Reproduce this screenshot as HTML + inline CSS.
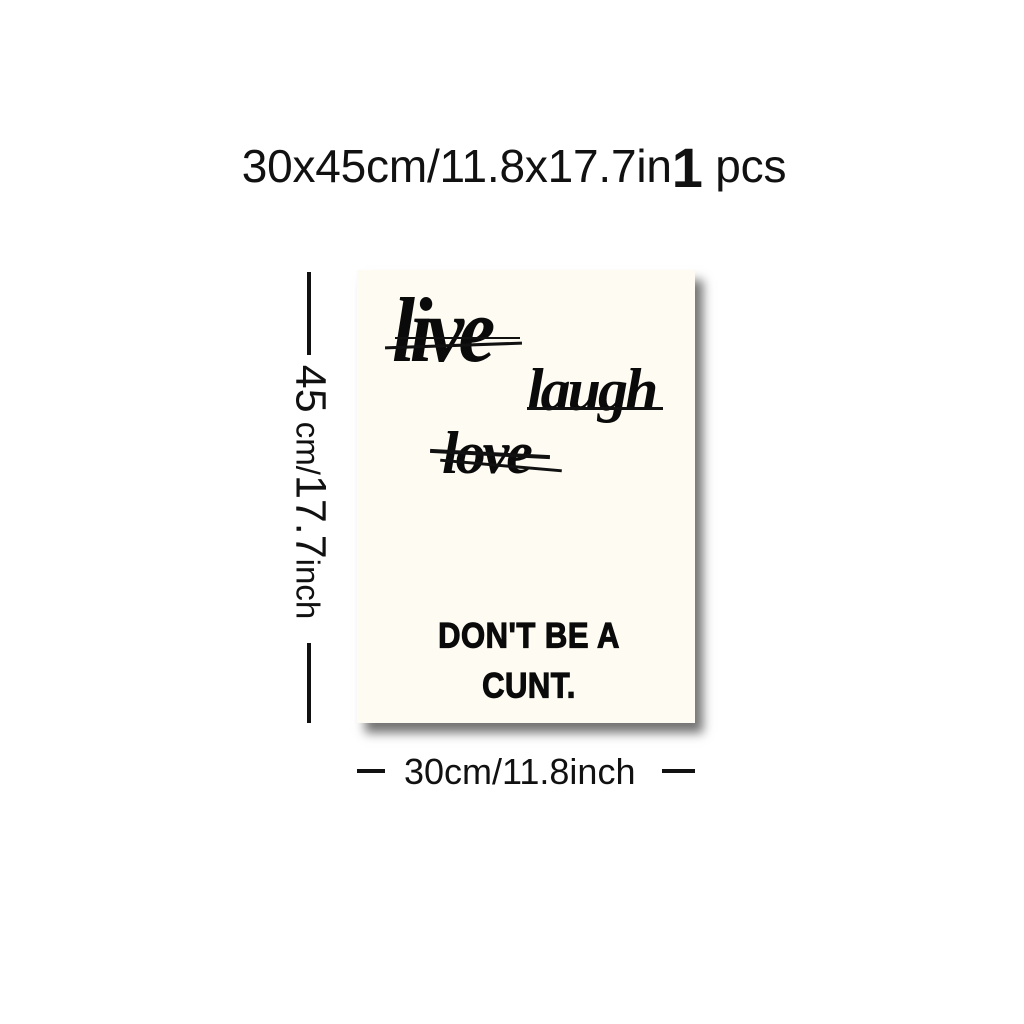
<!DOCTYPE html>
<html><head><style>
body{margin:0;width:1024px;height:1024px;background:#fff;position:relative;overflow:hidden;font-family:"Liberation Sans",sans-serif}
.a{position:absolute}
.title{top:130px;left:0;width:1028px;text-align:center;font-size:46px;color:#111;white-space:nowrap;letter-spacing:-0.2px}
.poster{left:357px;top:270px;width:338px;height:453px;background:#fdfbf2;box-shadow:8px 10px 10px rgba(0,0,0,.55)}
.sc{font-family:"Liberation Serif",serif;font-style:italic;font-weight:bold;color:#0a0a0a;line-height:1}
.bar{background:#111;height:3px}
.bold{font-weight:900;font-size:31px;color:#0a0a0a;text-align:center;width:338px;left:360px;letter-spacing:.5px;transform:scaleY(1.15);-webkit-text-stroke:1px #0a0a0a}
.vl{background:#111;width:4px}
.hl{background:#111;height:4px}
</style></head><body>
<div class="a title">30x45cm/11.8x17.7in<span style="font-size:56px;font-weight:bold;position:relative;top:5px">1</span> pcs</div>
<div class="a poster"></div>
<div class="a sc" style="left:392px;top:284px;font-size:92px;letter-spacing:-6px;transform:scaleX(.9);transform-origin:left">live</div>
<div class="a bar" style="left:385px;top:344px;width:137px;transform:rotate(-2deg)"></div>
<div class="a bar" style="left:395px;top:337px;width:125px;height:2px"></div>
<div class="a sc" style="left:527px;top:360px;font-size:60px;letter-spacing:-3px">laugh</div>
<div class="a bar" style="left:527px;top:407px;width:136px"></div>
<div class="a sc" style="left:442px;top:423px;font-size:60px;letter-spacing:-3px">love</div>
<div class="a bar" style="left:430px;top:452px;width:120px;height:4px;transform:rotate(3deg)"></div>
<div class="a bar" style="left:440px;top:464px;width:122px;height:3px;transform:rotate(5deg)"></div>
<div class="a bold" style="top:618px">DON'T BE A</div>
<div class="a bold" style="top:668px">CUNT.</div>
<div class="a vl" style="left:307px;top:272px;height:83px"></div>
<div class="a vl" style="left:307px;top:643px;height:80px"></div>
<div class="a" style="left:310px;top:492px;transform:translate(-50%,-50%) rotate(90deg);font-size:33px;color:#111;white-space:nowrap"><span style="font-size:43px">45</span> cm/<span style="font-size:43px">17.7</span>inch</div>
<div class="a hl" style="left:357px;top:769px;width:28px"></div>
<div class="a hl" style="left:662px;top:769px;width:33px"></div>
<div class="a" style="left:404px;top:751px;font-size:36px;color:#111">30cm/11.8inch</div>
</body></html>
